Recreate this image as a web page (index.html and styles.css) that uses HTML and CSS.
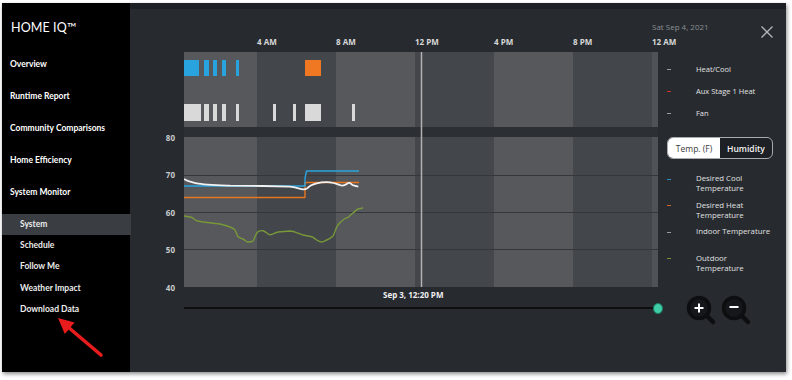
FILE: index.html
```html
<!DOCTYPE html>
<html lang="en">
<head>
<meta charset="utf-8">
<title>Home IQ – System Monitor</title>
<link rel="stylesheet" href="styles.css">
</head>
<body>
<div class="window">
  <aside class="sidebar">
    <div class="brand">HOME IQ™</div>
    <nav class="nav">
      <a class="nav-item">Overview</a>
      <a class="nav-item">Runtime Report</a>
      <a class="nav-item">Community Comparisons</a>
      <a class="nav-item">Home Efficiency</a>
      <a class="nav-item">System Monitor</a>
    </nav>
    <nav class="subnav">
      <a class="sub-item active">System</a>
      <a class="sub-item">Schedule</a>
      <a class="sub-item">Follow Me</a>
      <a class="sub-item">Weather Impact</a>
      <a class="sub-item">Download Data</a>
    </nav>
    <svg class="arrow" width="60" height="60" viewBox="50 310 60 60">
      <line x1="68" y1="327" x2="101" y2="355" stroke="#e81c1c" stroke-width="3.6" stroke-linecap="round"/>
      <polygon points="58,318 74.6,322.6 64.8,334" fill="#e81c1c"/>
    </svg>
  </aside>

  <main class="main">
    <div class="timeaxis">
      <div class="date">Sat Sep 4, 2021</div>
      <div class="hours">
        <span>4 AM</span><span>8 AM</span><span>12 PM</span><span>4 PM</span><span>8 PM</span><span>12 AM</span>
      </div>
    </div>
    <div class="close-cell">
      <svg width="12" height="12" viewBox="0 0 12 12"><path d="M0.5 0.5 L11.5 11.5 M11.5 0.5 L0.5 11.5" stroke="#b4b6b8" stroke-width="1.3"/></svg>
    </div>

    <svg class="chart" width="474" height="235" viewBox="0 0 474 235">
      <g>
        <rect x="0" y="0" width="73" height="75" fill="#56585c"/>
        <rect x="73" y="0" width="79" height="75" fill="#43464a"/>
        <rect x="152" y="0" width="79" height="75" fill="#56585c"/>
        <rect x="231" y="0" width="79" height="75" fill="#43464a"/>
        <rect x="310" y="0" width="79" height="75" fill="#56585c"/>
        <rect x="389" y="0" width="79" height="75" fill="#43464a"/>
        <rect x="468" y="0" width="6" height="75" fill="#4f5256"/>
      </g>
      <g fill="#29a3dd">
        <rect x="0" y="8" width="15" height="16"/>
        <rect x="20" y="8" width="5" height="16"/>
        <rect x="29" y="8" width="4" height="16"/>
        <rect x="38" y="8" width="4" height="16"/>
        <rect x="52" y="8" width="3" height="16"/>
      </g>
      <rect x="121" y="8" width="16" height="16" fill="#f07822"/>
      <g fill="#d9d9d9">
        <rect x="0" y="52" width="17" height="17"/>
        <rect x="20" y="52" width="5" height="17"/>
        <rect x="29" y="52" width="4" height="17"/>
        <rect x="38" y="52" width="4" height="17"/>
        <rect x="52" y="52" width="3" height="17"/>
        <rect x="89" y="52" width="3" height="17"/>
        <rect x="109" y="52" width="3" height="17"/>
        <rect x="121" y="52" width="16" height="17"/>
        <rect x="168" y="52" width="3" height="17"/>
      </g>
      <rect x="0" y="75" width="474" height="10" fill="#2c2f33"/>
      <g>
        <rect x="0" y="85" width="73" height="150" fill="#56585c"/>
        <rect x="73" y="85" width="79" height="150" fill="#43464a"/>
        <rect x="152" y="85" width="79" height="150" fill="#56585c"/>
        <rect x="231" y="85" width="79" height="150" fill="#43464a"/>
        <rect x="310" y="85" width="79" height="150" fill="#56585c"/>
        <rect x="389" y="85" width="79" height="150" fill="#43464a"/>
        <rect x="468" y="85" width="6" height="150" fill="#4f5256"/>
      </g>
      <g stroke="#33363a" stroke-width="1">
        <line x1="0" y1="123.5" x2="474" y2="123.5"/>
        <line x1="0" y1="160.5" x2="474" y2="160.5"/>
        <line x1="0" y1="197.5" x2="474" y2="197.5"/>
      </g>
      <line x1="237.5" y1="0" x2="237.5" y2="235" stroke="#b0b2b4" stroke-width="1.5"/>
      <g fill="none" stroke-linejoin="round">
        <path d="M0 145.5 H121 V130.5 H175" stroke="#e8761f" stroke-width="1.4"/>
        <path d="M0 134 H121 V126 L122.5 119 H175" stroke="#2aa2dc" stroke-width="1.4"/>
        <path d="M0 127 C3 129 6 130 12.7 131.3 S 30 133 46 133.7 L79 134 L106 134.7 C110 135 115 136.5 119.3 137.3 C121 137.5 122 137 123 136.5 C125 134 128 132.5 132.7 131.3 C136 130.5 142 130 146 130.3 C150 130.6 153 132 156 133 C158 134 160 134 162.7 132 C164 131 165 130.6 166 131 C167.5 132 168 133 169.3 133.3 L174.3 134.7" stroke="#f2f2f2" stroke-width="1.8"/>
        <path d="M0 164 L7.7 165.3 C10 166.5 11 168 12.7 168.7 L19 170 L36 172 C40 173 44 174 46 175 C49 176 50 177 51 178 C52 180 53 183 54 184.7 C56 186 57 186.5 59 187 C61 188 62 190 64 190 C66 190 68 190 69 189 C71 186 72 181 74 179.7 C76 178.5 77 178.5 79 178.7 C82 179.5 84 182.7 86 182.7 C89 182.7 91 180.5 94 180 L106 179 C109 179.3 111 180 112.7 180.7 C115 181.5 117 182.5 119 183 L127.7 184.7 C130 186 131 187 132.7 188 C134.5 189 136 190 137.7 190 C139.5 190 141 188.8 142.7 188 C145 187 147 186 149 184 C151 181 152 175 154 173 C156 170.5 157.5 169 159 168 C161 166.5 162.5 166 164 165.3 C166 164 167.5 162 169 161 C171 159.5 172.5 157.5 174 157 L179 156" stroke="#78983a" stroke-width="1.4"/>
      </g>
    </svg>

    <div class="legend-top">
      <div class="legend-item"><i class="dash dash-grey"></i><span>Heat/Cool</span></div>
      <div class="legend-item"><i class="dash dash-red"></i><span>Aux Stage 1 Heat</span></div>
      <div class="legend-item"><i class="dash dash-grey"></i><span>Fan</span></div>
    </div>

    <div class="yaxis">
      <span>80</span><span>70</span><span>60</span><span>50</span><span>40</span>
    </div>

    <div class="legend-bottom">
      <div class="toggle">
        <span class="toggle-opt on">Temp. (F)</span>
        <span class="toggle-opt">Humidity</span>
      </div>
      <div class="legend-list">
        <div class="legend-row"><i class="dash dash-blue"></i><span>Desired Cool<br>Temperature</span></div>
        <div class="legend-row"><i class="dash dash-orange"></i><span>Desired Heat<br>Temperature</span></div>
        <div class="legend-row"><i class="dash dash-grey"></i><span>Indoor Temperature</span></div>
        <div class="legend-row"><i class="dash dash-green"></i><span>Outdoor<br>Temperature</span></div>
      </div>
    </div>

    <div class="footer">
      <div class="stamp">Sep 3, 12:20 PM</div>
      <div class="slider"><span class="track"></span><span class="knob"></span></div>
    </div>

    <div class="zoom-cell">
      <svg width="32" height="32" viewBox="0 0 32 32">
        <line x1="20" y1="20" x2="27" y2="27" stroke="#0d0e10" stroke-width="4.5" stroke-linecap="round"/>
        <circle cx="13" cy="13" r="10.5" fill="#15171a" stroke="#0d0e10" stroke-width="3.5"/>
        <path d="M13 8.5 V17.5 M8.5 13 H17.5" stroke="#ffffff" stroke-width="2"/>
      </svg>
      <svg width="32" height="32" viewBox="0 0 32 32">
        <line x1="20" y1="20" x2="27" y2="27" stroke="#0d0e10" stroke-width="4.5" stroke-linecap="round"/>
        <circle cx="13" cy="13" r="10.5" fill="#15171a" stroke="#0d0e10" stroke-width="3.5"/>
        <path d="M8.5 12 H17.5" stroke="#ffffff" stroke-width="2"/>
      </svg>
    </div>
  </main>
</div>
</body>
</html>
```
FILE: styles.css
```css
* { box-sizing: border-box; }
html, body { margin: 0; padding: 0; background: #ffffff; }
body { width: 792px; height: 380px; overflow: hidden; font-family: "Open Sans", "Liberation Sans", sans-serif; }

.window {
  margin: 3px 0 0 2px;
  width: 784px;
  height: 369px;
  display: flex;
  box-shadow: 1px 2px 4px rgba(0, 0, 0, 0.45);
}

/* ---------- sidebar ---------- */
.sidebar {
  position: relative;
  width: 128px;
  flex: none;
  background: #000;
  color: #fff;
  font-family: Lato, "Open Sans", sans-serif;
  padding-top: 17px;
}
.brand {
  padding-left: 9px;
  font-size: 12.5px;
  line-height: 16px;
  letter-spacing: 0.1px;
}
.nav { display: flex; flex-direction: column; margin-top: 12px; }
.nav-item {
  height: 32px;
  line-height: 32px;
  padding-left: 8px;
  font-size: 8.5px;
  font-weight: 700;
  white-space: nowrap;
}
.subnav { display: flex; flex-direction: column; margin-top: 5.7px; }
.sub-item {
  height: 21.3px;
  line-height: 21.3px;
  padding-left: 18px;
  font-size: 8.5px;
  font-weight: 700;
  color: #ececec;
}
.sub-item.active { background: #3a3d41; margin-right: -1px; }
.arrow { position: absolute; left: 48px; top: 307px; }

/* ---------- main ---------- */
.main {
  flex: 1;
  background: #272b30;
  border-top: 6px solid #1c1f23;
  display: grid;
  grid-template-columns: 54px 474px 1fr;
  grid-template-rows: 43px 75px 10px 150px 1fr;
  color: #d6d6d6;
}

.timeaxis { grid-column: 2; grid-row: 1; }
.date {
  margin: 13px 0 0 468px;
  font-size: 8px;
  line-height: 10px;
  color: #8b8e92;
  white-space: nowrap;
}
.hours {
  display: flex;
  margin-top: 5px;
  padding-left: 73px;
  font-size: 8px;
  font-weight: 700;
  line-height: 10px;
  color: #d8d8d8;
}
.hours span { width: 79px; flex: none; white-space: nowrap; }

.close-cell { grid-column: 3; grid-row: 1; justify-self: end; margin: 12px 13px 0 0; }

.chart { grid-column: 2; grid-row: 2 / 5; display: block; }

.legend-top { grid-column: 3; grid-row: 2; padding-top: 6px; }
.legend-item {
  display: flex;
  align-items: center;
  height: 22px;
  padding-left: 9px;
  font-size: 7.5px;
  color: #e2e2e2;
  white-space: nowrap;
}
.dash { display: block; width: 4px; height: 1px; margin-right: 25px; flex: none; }
.dash-grey { background: #9a9c9f; }
.dash-red { background: #d0312d; }
.dash-blue { background: #2a8dc0; }
.dash-orange { background: #d0672a; }
.dash-green { background: #72913a; }

.yaxis {
  grid-column: 1;
  grid-row: 4;
  display: flex;
  flex-direction: column;
  justify-content: space-between;
  align-items: flex-end;
  padding-right: 9px;
  font-size: 8px;
  font-weight: 700;
  color: #c9cacc;
}
.yaxis span { height: 0; display: flex; align-items: center; }

.legend-bottom { grid-column: 3; grid-row: 4; padding-left: 9px; }
.toggle {
  display: flex;
  width: 106px;
  height: 22px;
  border: 1px solid #a9abad;
  border-radius: 6px;
  overflow: hidden;
  background: #1d2024;
  font-size: 8.5px;
}
.toggle-opt {
  flex: 1;
  display: flex;
  align-items: center;
  justify-content: center;
  color: #f4f4f4;
  font-weight: 600;
}
.toggle-opt.on { background: #ffffff; color: #3a3a3a; font-weight: 400; }
.legend-list { margin-top: 14.3px; }
.legend-row {
  display: flex;
  align-items: flex-start;
  height: 26.5px;
  font-size: 7.8px;
  line-height: 10px;
  color: #e0e0e0;
}
.legend-row .dash { margin-top: 5.5px; }

.footer { grid-column: 2; grid-row: 5; }
.stamp {
  margin: 3px 0 0 199px;
  font-size: 8px;
  font-weight: 700;
  line-height: 10px;
  color: #f0f0f0;
  white-space: nowrap;
}
.slider { display: flex; align-items: center; height: 12px; margin-top: 2px; }
.track { flex: 1; height: 1.5px; background: #0e0f11; }
.knob {
  width: 10px;
  height: 11px;
  margin-right: -5px;
  border-radius: 50%;
  background: #3fcca6;
  border: 1.5px solid #1f7d66;
  flex: none;
}

.zoom-cell { grid-column: 3; grid-row: 5; display: flex; gap: 3px; padding-left: 28px; margin-top: 8px; align-self: start; }
.zoom-cell svg { display: block; }
```
